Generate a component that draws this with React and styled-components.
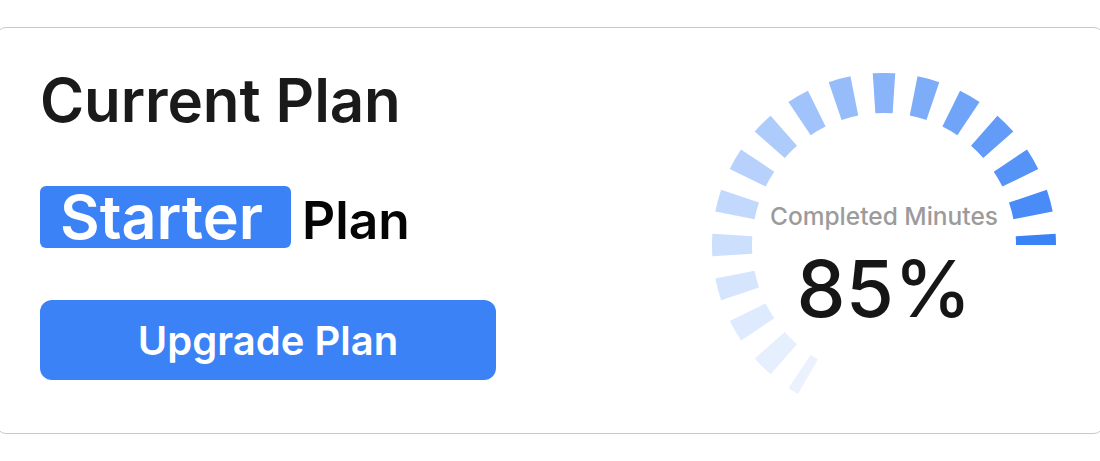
import React from "react";
import styled, { createGlobalStyle } from "styled-components";

const Global = createGlobalStyle`
  html, body { margin: 0; padding: 0; background: #ffffff; }
  body { font-family: Inter, "Noto Sans", sans-serif; overflow: hidden; }
  * { box-sizing: border-box; }
`;

const Card = styled.section`
  margin: 27px -4px 0;
  height: 407px;
  border: 1px solid #c9c9c9;
  border-radius: 10px;
  background: #fff;
  display: flex;
  justify-content: space-between;
  align-items: flex-start;
  padding: 0 39px 0 43px;
`;

const Left = styled.div`
  display: flex;
  flex-direction: column;
  align-items: flex-start;
  padding-top: 36px;
`;

const Title = styled.h1`
  margin: 0;
  font-size: 60px;
  line-height: 72px;
  font-weight: 600;
  color: #1a1a1a;
  letter-spacing: -0.1px;
`;

const PlanRow = styled.div`
  display: flex;
  align-items: baseline;
  gap: 11px;
  margin-top: 50px;
`;

const Badge = styled.span`
  display: inline-block;
  height: 62px;
  padding: 0 28px 0 20px;
  border-radius: 6px;
  background: #3b82f6;
  color: #fff;
  font-size: 61px;
  font-weight: 600;
  line-height: 62px;
`;

const PlanWord = styled.span`
  font-size: 51.5px;
  font-weight: 600;
  line-height: 54px;
  color: #050505;
`;

const UpgradeButton = styled.button`
  margin-top: 52px;
  width: 456px;
  height: 80px;
  border: none;
  border-radius: 12px;
  background: #3b82f6;
  color: #fff;
  font-family: Inter, "Noto Sans", sans-serif;
  font-size: 40px;
  font-weight: 600;
  cursor: pointer;
`;

const Gauge = styled.div`
  margin-top: 37px;
  width: 360px;
  height: 360px;
  display: grid;
  justify-items: center;
  align-items: start;
  > * { grid-area: 1 / 1; }
`;

const GaugeText = styled.div`
  display: flex;
  flex-direction: column;
  align-items: center;
  margin-top: 137px;
`;

const GaugeLabel = styled.span`
  font-size: 24.5px;
  font-weight: 500;
  color: #9b9b9b;
  line-height: 28px;
`;

const GaugeValue = styled.span`
  font-size: 78px;
  font-weight: 500;
  color: #161616;
  line-height: 94px;
  margin-top: 12px;
`;

const CX = 180;
const CY = 180;
const RI = 132;
const RO = 172;

function pt(r, deg) {
  const a = (deg * Math.PI) / 180;
  return [CX + r * Math.sin(a), CY - r * Math.cos(a)];
}

function sector(a0, a1) {
  const [x1, y1] = pt(RO, a0);
  const [x2, y2] = pt(RO, a1);
  const [x3, y3] = pt(RI, a1);
  const [x4, y4] = pt(RI, a0);
  return `M${x1.toFixed(2)} ${y1.toFixed(2)} A${RO} ${RO} 0 0 1 ${x2.toFixed(2)} ${y2.toFixed(2)} L${x3.toFixed(2)} ${y3.toFixed(2)} A${RI} ${RI} 0 0 0 ${x4.toFixed(2)} ${y4.toFixed(2)} Z`;
}

const segments = Array.from({ length: 17 }, (_, i) => {
  const mid = -150 + 15 * i;
  let a0 = mid - 3.75;
  let a1 = mid + 3.75;
  if (i === 0) a0 = mid;
  if (i === 16) a1 = mid;
  const t = i / 16;
  const opacity = 0.1 + 0.9 * Math.pow(t, 1.25);
  return { d: sector(a0, a1), opacity };
});

function Ring() {
  return (
    <svg width="360" height="360" viewBox="0 0 360 360" aria-hidden="true">
      {segments.map((s, i) => (
        <path key={i} d={s.d} fill="#3b82f6" fillOpacity={s.opacity} />
      ))}
    </svg>
  );
}

export default function App() {
  return (
    <>
      <Global />
      <Card>
        <Left>
          <Title>Current Plan</Title>
          <PlanRow>
            <Badge>Starter</Badge>
            <PlanWord>Plan</PlanWord>
          </PlanRow>
          <UpgradeButton>Upgrade Plan</UpgradeButton>
        </Left>
        <Gauge>
          <Ring />
          <GaugeText>
            <GaugeLabel>Completed Minutes</GaugeLabel>
            <GaugeValue>85%</GaugeValue>
          </GaugeText>
        </Gauge>
      </Card>
    </>
  );
}
